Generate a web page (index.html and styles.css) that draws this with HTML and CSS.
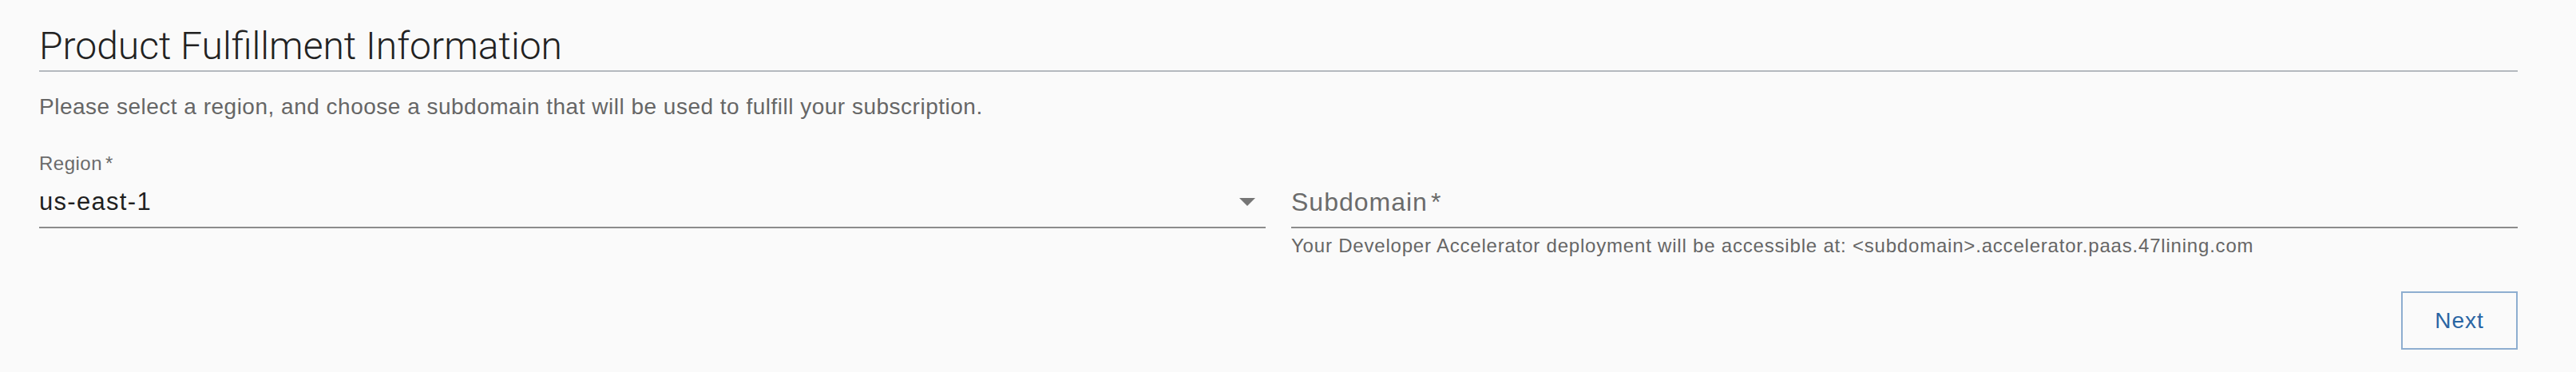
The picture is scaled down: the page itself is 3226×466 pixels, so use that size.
FILE: index.html
```html
<!DOCTYPE html>
<html lang="en">
<head>
    <meta charset="UTF-8">
    <meta name="viewport" content="width=device-width, initial-scale=1.0">
    <title>Product Fulfillment Information</title>
    <link rel="stylesheet" href="styles.css">
</head>
<body>
    <main class="fulfillment">
        <h1 class="section-title">Product Fulfillment Information</h1>
        <p class="intro">Please select a region, and choose a subdomain that will be used to fulfill your subscription.</p>

        <div class="fields">
            <div class="field">
                <label class="field-label" for="region">Region<span class="req">*</span></label>
                <div class="select-box" id="region">
                    <span class="select-value">us-east-1</span>
                    <svg class="select-arrow" width="20" height="10" viewBox="0 0 20 10">
                        <path d="M0 0h20L10 10z" fill="#757575"/>
                    </svg>
                </div>
            </div>
            <div class="field">
                <div class="input-box">
                    <span class="input-placeholder">Subdomain<span class="req">*</span></span>
                </div>
                <p class="helper">Your Developer Accelerator deployment will be accessible at: &lt;subdomain&gt;.accelerator.paas.47lining.com</p>
            </div>
        </div>

        <div class="actions">
            <button class="next-btn" type="button">Next</button>
        </div>
    </main>
</body>
</html>
```

FILE: styles.css
```css
body {
    margin: 0;
    background-color: #fafafa;
    font-family: 'Liberation Sans', Arial, sans-serif;
}
.fulfillment {
    padding: 30px 0 0 49px;
    width: 3104px;
}
.section-title {
    margin: 0;
    font-family: 'Roboto', sans-serif;
    font-weight: 300;
    font-size: 48px;
    line-height: 56px;
    color: #222;
    padding-bottom: 2px;
    border-bottom: 2px solid #b4b9be;
}
.intro {
    margin: 24px 0 37px;
    font-size: 28px;
    line-height: 40px;
    letter-spacing: 0.5px;
    color: #666;
}
.fields {
    display: flex;
    gap: 32px;
}
.field {
    flex: 1;
}
.field-label {
    display: block;
    font-size: 24px;
    line-height: 28px;
    letter-spacing: 0.5px;
    color: #6b6b6b;
}
.req {
    margin-left: 4px;
}
.select-box {
    display: flex;
    align-items: center;
    justify-content: space-between;
    padding: 16px 13px 13px 0;
    border-bottom: 2px solid #8c8c8c;
}
.select-value {
    font-size: 31px;
    line-height: 36px;
    letter-spacing: 1.3px;
    color: #1f1f1f;
}
.input-box {
    padding: 44px 0 13px;
    border-bottom: 2px solid #8c8c8c;
}
.input-placeholder {
    display: block;
    font-size: 32px;
    line-height: 36px;
    letter-spacing: 1px;
    color: #6b6b6b;
}
.helper {
    margin: 8px 0 0;
    font-size: 24px;
    line-height: 28px;
    letter-spacing: 0.8px;
    color: #666;
}
.actions {
    display: flex;
    justify-content: flex-end;
    margin-top: 43px;
}
.next-btn {
    display: flex;
    align-items: center;
    justify-content: center;
    box-sizing: border-box;
    width: 146px;
    height: 73px;
    padding: 0;
    background: transparent;
    border: 2px solid #8eaed0;
    border-radius: 0;
    font-family: 'Liberation Sans', Arial, sans-serif;
    font-size: 28px;
    letter-spacing: 1px;
    color: #2a65a3;
}
```
